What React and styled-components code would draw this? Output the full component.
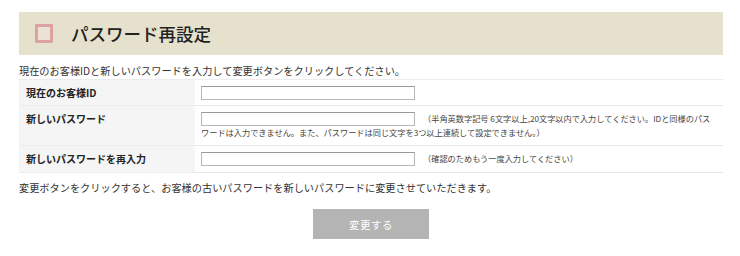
import styled, { createGlobalStyle } from 'styled-components';

const GlobalStyle = createGlobalStyle`
  body {
    margin: 0;
    background: #fff;
    font-family: "Noto Sans CJK JP", "Noto Sans", sans-serif;
    color: #333;
  }
`;

const Page = styled.div`
  width: 704px;
  padding: 12px 17px 0 19px;
`;

const Header = styled.div`
  height: 43px;
  display: flex;
  align-items: center;
  padding-left: 16px;
  background: #e5e1cd;
`;

const Mark = styled.span`
  width: 18px;
  height: 19px;
  box-sizing: border-box;
  border: 3px solid #dba2a2;
  background: #ebe1d4;
  margin-right: 18px;
`;

const Title = styled.h1`
  margin: 0;
  font-size: 17.5px;
  font-weight: 500;
  color: #222;
`;

const Lead = styled.p`
  margin: 8px 0 0;
  font-size: 10.2px;
  line-height: 16px;
  color: #333;
`;

const Table = styled.table`
  width: 100%;
  border-collapse: collapse;
  border-top: 1px solid #ececec;
`;

const Label = styled.th`
  width: 176px;
  box-sizing: border-box;
  padding: 6px 7px 5px;
  background: #f5f5f5;
  border-bottom: 1px solid #ececec;
  text-align: left;
  vertical-align: top;
  font-size: 10px;
  line-height: 14px;
  font-weight: 700;
  color: #222;
`;

const Value = styled.td`
  padding: 6px 8px ${p => (p.$note ? '6px' : '5px')} 6px;
  border-bottom: 1px solid #e6e6e6;
  vertical-align: top;
  font-size: 8.2px;
  line-height: 13px;
  color: #444;
`;

const Field = styled.input`
  width: 214px;
  height: 14px;
  box-sizing: border-box;
  margin: 0 8px 0 0;
  padding: 0 3px;
  border: 1px solid #b7b7b7;
  border-top-color: #9a9a9a;
  vertical-align: top;
  font-size: 10px;
`;

const Note = styled.span`
  font-size: 8.2px;
  line-height: 13px;
`;

const Footer = styled.p`
  margin: 7px 0 0;
  font-size: 10.2px;
  line-height: 16px;
  color: #333;
`;

const Actions = styled.div`
  display: flex;
  justify-content: center;
  margin-top: 13px;
`;

const Submit = styled.button`
  width: 116px;
  height: 30px;
  border: none;
  background: #b4b4b4;
  color: #fff;
  font-family: inherit;
  font-size: 10.5px;
  letter-spacing: 0.5px;
`;

const rows = [
  { label: '現在のお客様ID' },
  {
    label: '新しいパスワード',
    type: 'password',
    note: '（半角英数字記号 6文字以上,20文字以内で入力してください。IDと同様のパスワードは入力できません。また、パスワードは同じ文字を3つ以上連続して設定できません。）',
  },
  { label: '新しいパスワードを再入力', type: 'password', note: '（確認のためもう一度入力してください）' },
];

export default function App() {
  return (
    <Page>
      <GlobalStyle />
      <Header>
        <Mark />
        <Title>パスワード再設定</Title>
      </Header>
      <Lead>現在のお客様IDと新しいパスワードを入力して変更ボタンをクリックしてください。</Lead>
      <Table>
        <tbody>
          {rows.map(row => (
            <tr key={row.label}>
              <Label>{row.label}</Label>
              <Value $note={!!row.note}>
                <Field type={row.type || 'text'} />
                {row.note && <Note>{row.note}</Note>}
              </Value>
            </tr>
          ))}
        </tbody>
      </Table>
      <Footer>変更ボタンをクリックすると、お客様の古いパスワードを新しいパスワードに変更させていただきます。</Footer>
      <Actions>
        <Submit type="button">変更する</Submit>
      </Actions>
    </Page>
  );
}
